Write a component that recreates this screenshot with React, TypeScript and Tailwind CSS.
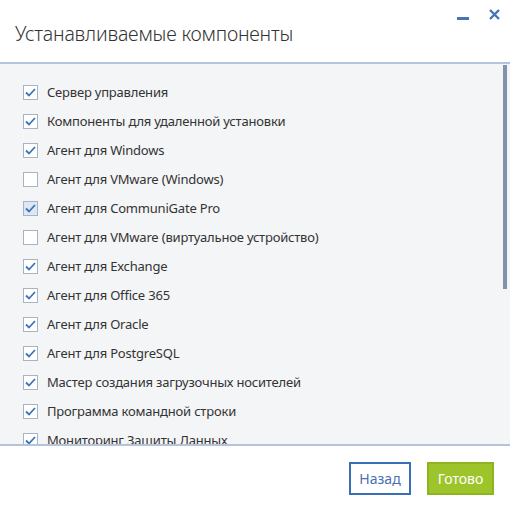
import { useState } from "react";

type Componente = {
    nome: string,
    marcado: boolean,
}

const componentes: Componente[] = [
    { nome: "Сервер управления", marcado: true },
    { nome: "Компоненты для удаленной установки", marcado: true },
    { nome: "Агент для Windows", marcado: true },
    { nome: "Агент для VMware (Windows)", marcado: false },
    { nome: "Агент для CommuniGate Pro", marcado: true },
    { nome: "Агент для VMware (виртуальное устройство)", marcado: false },
    { nome: "Агент для Exchange", marcado: true },
    { nome: "Агент для Office 365", marcado: true },
    { nome: "Агент для Oracle", marcado: true },
    { nome: "Агент для PostgreSQL", marcado: true },
    { nome: "Мастер создания загрузочных носителей", marcado: true },
    { nome: "Программа командной строки", marcado: true },
    { nome: "Мониторинг Защиты Данных", marcado: true },
]

function Checkbox({ marcado, hover }: { marcado: boolean, hover?: boolean }) {
    return (
        <span className={`w-[15px] h-[15px] border border-[#a9b3c2] flex items-center justify-center shrink-0 ${hover ? "bg-[#dde7f5]" : "bg-white"}`}>
            {marcado && (
                <svg width="11" height="9" viewBox="0 0 11 9">
                    <path d="M1 4.5 L4 7.5 L10 1" fill="none" stroke="#3f72b8" strokeWidth="1.8" />
                </svg>
            )}
        </span>
    )
}

export default function App() {
    const [itens, setItens] = useState(componentes)

    return (
        <div className="w-[510px] h-[510px] bg-white flex flex-col overflow-hidden" style={{ fontFamily: '"Noto Sans", "DejaVu Sans", sans-serif' }}>
            {/* Cabeçalho */}
            <div className="h-[64px] shrink-0 relative border-b-2 border-[#b4c4dc]">
                <h1 className="absolute left-[15px] top-[24px] text-[19.5px] font-light text-[#333] leading-none tracking-[-0.2px]">
                    Устанавливаемые компоненты
                </h1>
                <div className="absolute left-[457px] top-[17px] w-[12px] h-[3px] bg-[#4774b6]"></div>
                <svg className="absolute left-[489px] top-[9px]" width="11" height="11" viewBox="0 0 11 11">
                    <path d="M1 1 L10 10 M10 1 L1 10" stroke="#4774b6" strokeWidth="2.4" />
                </svg>
            </div>

            {/* Lista */}
            <div className="h-[382px] shrink-0 relative bg-[#f4f5f7] border-b-2 border-[#b4c4dc] overflow-hidden pt-[14px]">
                {itens.map((item, i) => (
                    <div
                        key={item.nome}
                        onClick={() => setItens(itens.map((x, j) => j === i ? { ...x, marcado: !x.marcado } : x))}
                        className="h-[29px] flex items-center pl-[23px] gap-[9px] cursor-pointer"
                    >
                        <Checkbox marcado={item.marcado} hover={i === 4} />
                        <span className="text-[13px] text-[#333] whitespace-nowrap tracking-[-0.2px]">{item.nome}</span>
                    </div>
                ))}
                <div className="absolute left-[503px] top-[1px] w-[4px] h-[224px] bg-[#8193ab]"></div>
            </div>

            {/* Botões */}
            <div className="flex-1 flex items-start justify-end pt-[16px] pr-[16px] gap-[16px]">
                <button className="w-[62px] h-[33px] border-2 border-[#3a6fb5] bg-white text-[14px] text-[#4a6fb4]">
                    Назад
                </button>
                <button className="w-[67px] h-[33px] border-2 border-[#8cb51f] bg-[#9dc42b] text-[14px] text-white">
                    Готово
                </button>
            </div>
        </div>
    )
}
